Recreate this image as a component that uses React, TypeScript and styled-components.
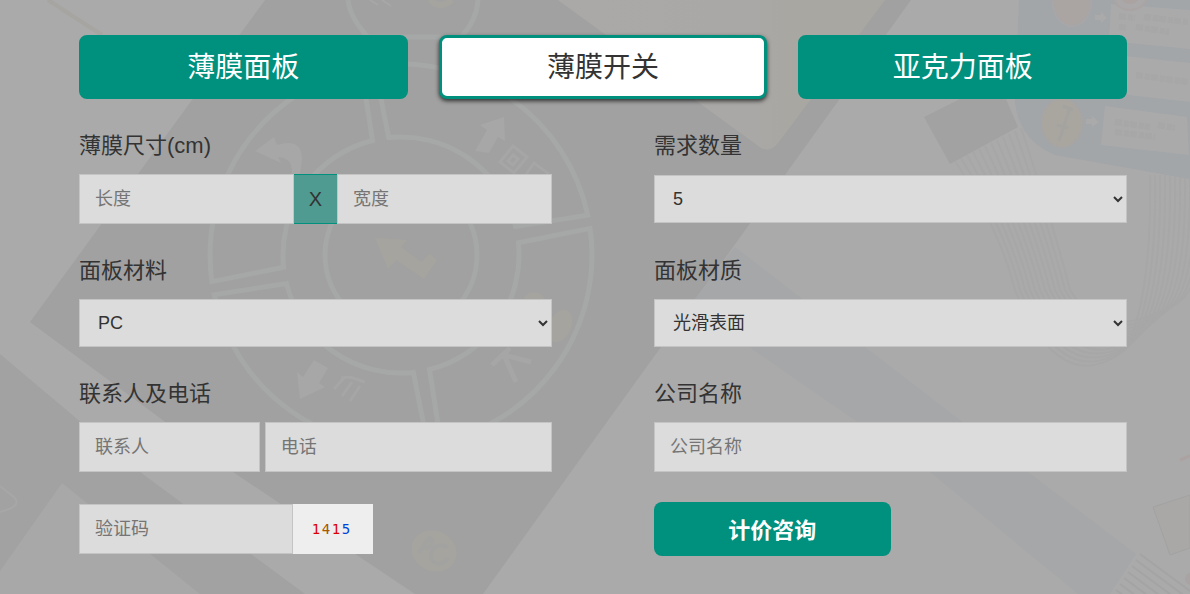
import React, { useState } from 'react';
import styled, { createGlobalStyle } from 'styled-components';

const GREEN = '#00907e';
const FONT = '"Liberation Sans", "Noto Sans CJK SC", sans-serif';

const GlobalStyle = createGlobalStyle`
  *, *::before, *::after { box-sizing: border-box; }
  body {
    margin: 0;
    background: #aaaaaa;
    color: #333333;
    font-family: ${FONT};
  }
`;

const Page = styled.main`
  position: relative;
  min-height: 100vh;
  padding: 35px 63px 38px 79px;
  overflow: hidden;
`;

const Backdrop = styled.svg`
  position: absolute;
  inset: 0;
  width: 100%;
  height: 100%;
`;

const Form = styled.form`
  position: relative;
  display: flex;
  flex-direction: column;
  gap: 32px;
`;

const Tabs = styled.div`
  display: grid;
  grid-template-columns: repeat(3, 1fr);
  gap: 31px;
`;

const Tab = styled.button<{ $active: boolean }>`
  height: 64px;
  padding: 2px 0 0;
  border: 3px solid ${GREEN};
  border-radius: 8px;
  background: ${(p) => (p.$active ? '#ffffff' : GREEN)};
  color: ${(p) => (p.$active ? '#333333' : '#ffffff')};
  box-shadow: ${(p) => (p.$active ? '0 2px 4px rgba(0, 0, 0, 0.7)' : 'none')};
  font-family: ${FONT};
  font-size: 28px;
  line-height: 56px;
  cursor: pointer;
`;

const Fields = styled.div`
  display: grid;
  grid-template-columns: repeat(2, minmax(0, 1fr));
  gap: 32px 102px;
`;

const Field = styled.div`
  display: flex;
  flex-direction: column;
  gap: 13px;
`;

const Label = styled.label`
  font-size: 22px;
  line-height: 30px;
`;

const ControlRow = styled.div<{ $gap?: number; $tall?: boolean }>`
  display: flex;
  align-items: center;
  gap: ${(p) => p.$gap ?? 0}px;
  min-height: ${(p) => (p.$tall ? 50 : 48)}px;
`;

const Input = styled.input<{ $grow?: number }>`
  flex: ${(p) => p.$grow ?? 1} 1 0;
  min-width: 0;
  height: 50px;
  padding: 0 15px;
  border: 1px solid #c4c4c4;
  border-radius: 0;
  background: #dcdcdc;
  color: #333333;
  font-family: ${FONT};
  font-size: 18px;

  &::placeholder {
    color: #757575;
    opacity: 1;
  }
`;

const CodeInput = styled(Input)`
  flex: 0 1 214px;
`;

const Select = styled.select`
  flex: 1;
  min-width: 0;
  height: 48px;
  padding: 0 0 0 14px;
  border: 1px solid #c4c4c4;
  border-radius: 0;
  background: #dcdcdc;
  color: #333333;
  font-family: ${FONT};
  font-size: 18px;
`;

const Times = styled.span`
  flex: 0 0 43px;
  height: 50px;
  border: 1px solid ${GREEN};
  border-width: 1px 0;
  background: #509b91;
  font-size: 20px;
  line-height: 48px;
  text-align: center;
`;

const Captcha = styled.button`
  display: flex;
  justify-content: center;
  align-items: center;
  width: 80px;
  height: 50px;
  padding: 0 4px 0 0;
  border: 0;
  background: #eeeeee;
  font-family: "DejaVu Sans Mono", monospace;
  font-size: 14px;
  cursor: pointer;
`;

const Digit = styled.span<{ $color: string }>`
  width: 10px;
  color: ${(p) => p.$color};
`;

const Submit = styled.button`
  width: 50%;
  height: 54px;
  padding: 0 0 2px;
  border: 0;
  border-radius: 8px;
  background: ${GREEN};
  color: #ffffff;
  font-family: ${FONT};
  font-size: 22px;
  font-weight: bold;
  cursor: pointer;
`;

const Actions = styled(Fields)`
  margin-top: -2px;
  align-items: center;
`;

const polar = (r: number, deg: number) => {
  const a = (deg * Math.PI) / 180;
  return `${(401 + r * Math.cos(a)).toFixed(1)} ${(255 + r * Math.sin(a)).toFixed(1)}`;
};

/* One quarter of the dial: a ring sector with a slim gap on either side. */
const sector = (start: number) =>
  `M${polar(118, start + 4)} L${polar(191, start + 2)} A191 191 0 0 1 ${polar(191, start + 88)} ` +
  `L${polar(118, start + 86)} A118 118 0 0 0 ${polar(118, start + 4)}Z`;

const range = (n: number) => Array.from({ length: n }, (_, i) => i);

function Scene() {
  return (
    <Backdrop viewBox="0 0 1190 594" preserveAspectRatio="xMidYMid slice" aria-hidden="true">
      <defs>
        <linearGradient id="tan" x1="0" x2="1">
          <stop offset="0" stopColor="#aaa9a8" />
          <stop offset="0.6" stopColor="#a9a8a6" />
          <stop offset="0.7" stopColor="#a8a7a2" />
        </linearGradient>
      </defs>
      <rect width="1190" height="594" fill="#aaaaaa" />
      <path d="M265 0H911L483 594H415L233 472L30 322Z" fill="#a1a1a1" />
      <path d="M0 354L140 472L305 594H0Z" fill="#a2a2a2" />
      <path d="M62 483L0 571V594H200Z" fill="#a8a8a8" />
      <path d="M48 0L102 35" stroke="#a6a5a1" strokeWidth="4" />
      <path d="M558 0L757 145Q768 155 778 143L885 0Z" fill="url(#tan)" />
      <path d="M0 486L15 498Q19 504 12 508L0 512" fill="none" stroke="#a7a7a7" strokeWidth="2" />
      <path d="M735 247L865 347L960 420L1136 554L1110 594H1078L930 472L785 372L690 305Z" fill="#a5a7a9" />

      <g fill="none" stroke="#a6a7a7" strokeWidth="5">
        <circle cx="401" cy="255" r="76" />
        {[-10, 80, 170, 260].map((a) => <path key={a} d={sector(a)} />)}
        <path d="M348 0Q350 18 368 37H461Q477 20 478 0" />
      </g>
      <path d="M430 0Q440 10 452 0" fill="none" stroke="#a6a49f" strokeWidth="6" />
      <path d="M370 0L378 5M382 0L391 6" stroke="#a7a7a7" strokeWidth="2" />

      <g fill="#a7a7a7">
        <path d="M480 125L504 117L505 141L498 137L489 153L475 151L487 130Z" />
        <path d="M297 372L303 377L314 360L328 368L319 383L325 387L300 399Z" />
        <path d="M255 151L274 137L277 145Q302 137 302 160L299 180L291 177Q295 158 278 157L281 163Z" />
      </g>
      <g fill="none" stroke="#a6a6a6" strokeWidth="3">
        <path d="M513 146L527 157L514 173L500 162Z" />
        <path d="M513 155L518 159L513 165L508 161Z" />
        <path d="M525 176L534 163L549 174" />
        <path d="M334 389L344 378M342 396L352 382M350 401L360 386M341 378L350 377L365 382" />
        <path d="M492 365L510 348M504 355L531 362M504 355L516 382" strokeWidth="5" />
      </g>
      <g fill="#a6a49f">
        <path d="M375 238L407 240L401 247L421 262L430 254L437 260L424 279L396 260L388 269Z" />
        <ellipse cx="534" cy="302" rx="11" ry="10" />
        <ellipse cx="560" cy="326" rx="11" ry="17" transform="rotate(25 560 326)" />
        <ellipse cx="434" cy="551" rx="23" ry="20" transform="rotate(25 434 551)" />
      </g>
      <path
        d="M419 553L429 538Q435 540 430 546Q426 550 423 546M448 547Q437 542 432 551Q428 562 440 564Q446 562 448 558"
        fill="none" stroke="#a2a2a1" strokeWidth="4"
      />

      <path d="M924 117L960 99H1006L1018 127L950 164Z" fill="#a2a2a2" />
      <g fill="none" stroke="#a7a7a7" strokeWidth="2">
        {range(12).map((i) => (
          <path
            key={i}
            d={`M${955 + i * 6} ${161 - i * 3} Q${1000 + i * 5} 230 ${1015 + i * 5} 290 Q${1060 + i * 4} ${400 - i * 5} ${1125 + i * 4} ${350 - i * 4} Q${1152 + i * 5} 300 ${1150 + i * 5} 175`}
          />
        ))}
      </g>

      <path d="M1019 0L1016 70Q1006 135 1055 155L1190 179V0Z" fill="#a2a6a9" />
      <g fill="#aaaaaa">
        <path d="M1111 4L1190 10V49L1109 41Z" />
        <path d="M1124 56L1190 63V102L1120 94Z" />
        <path d="M1105 106L1187 117L1189 155L1101 145Z" />
        <path d="M1095 15L1101 15V12L1107 18L1101 23V20H1095ZM1086 119L1092 119V116L1099 122L1092 127V124H1086Z" />
      </g>
      <g stroke="#a6a6a6" strokeWidth="6" strokeDasharray="7 2 5 1" opacity="0.7">
        <path d="M1119 16L1135 18M1144 17L1188 22M1119 27L1128 28M1136 27L1169 32" />
        <path d="M1136 75L1188 82M1115 122L1150 127M1158 125L1175 128M1115 132L1155 137" />
      </g>
      <g strokeWidth="2">
        <ellipse cx="1072" cy="3" rx="19" ry="23" fill="#aaa4a3" stroke="#a7a7a9" />
        <ellipse cx="1130" cy="-7" rx="18" ry="17" fill="#aaa8a8" stroke="#aaa4a4" />
        <ellipse cx="1130" cy="-8" rx="11" ry="12" fill="#aaa3a2" />
        <ellipse cx="1062" cy="123" rx="20" ry="24" fill="#a8a69f" stroke="#a8a5a3" />
      </g>
      <path d="M1070 107L1059 141M1063 106L1073 110M1057 125L1068 128" stroke="#a5a3a0" strokeWidth="3" />

      <path d="M1190 495L1153 507L1170 555L1190 548Z" fill="#a9a8a6" stroke="#a2a2a2" />
      <path d="M1180 460L1190 456" stroke="#aca2a2" strokeWidth="3" />
      <circle cx="1191" cy="579" r="6" fill="#aaa3a3" />
      <g stroke="#a4a4a4" strokeWidth="2">
        {range(8).map((i) => (
          <path key={i} d={`M${1140 - i * 4} ${554 + i * 6}L${1205 - i * 4} ${602 + i * 6}`} />
        ))}
      </g>
    </Backdrop>
  );
}

const TABS = ['薄膜面板', '薄膜开关', '亚克力面板'];

const CODE = [
  { digit: '1', color: '#dd0000' },
  { digit: '4', color: '#aa5500' },
  { digit: '1', color: '#dd0000' },
  { digit: '5', color: '#0040dd' },
];

interface SelectFieldProps {
  id: string;
  label: string;
  options: string[];
  tall?: boolean;
}

function SelectField({ id, label, options, tall }: SelectFieldProps) {
  return (
    <Field>
      <Label htmlFor={id}>{label}</Label>
      <ControlRow $tall={tall}>
        <Select id={id} defaultValue={options[0]}>
          {options.map((o) => <option key={o}>{o}</option>)}
        </Select>
      </ControlRow>
    </Field>
  );
}

export default function App() {
  const [active, setActive] = useState(1);

  return (
    <>
      <GlobalStyle />
      <Page>
        <Scene />
        <Form onSubmit={(e) => e.preventDefault()}>
          <Tabs>
            {TABS.map((name, i) => (
              <Tab key={name} type="button" $active={i === active} aria-pressed={i === active} onClick={() => setActive(i)}>
                {name}
              </Tab>
            ))}
          </Tabs>

          <Fields>
            <Field>
              <Label htmlFor="length">薄膜尺寸(cm)</Label>
              <ControlRow>
                <Input id="length" placeholder="长度" />
                <Times>X</Times>
                <Input aria-label="宽度" placeholder="宽度" />
              </ControlRow>
            </Field>
            <SelectField id="quantity" label="需求数量" options={['5']} tall />
            <SelectField id="material" label="面板材料" options={['PC']} />
            <SelectField id="surface" label="面板材质" options={['光滑表面']} />
            <Field>
              <Label htmlFor="contact">联系人及电话</Label>
              <ControlRow $gap={5}>
                <Input id="contact" placeholder="联系人" $grow={7} />
                <Input type="tel" aria-label="电话" placeholder="电话" $grow={12} />
              </ControlRow>
            </Field>
            <Field>
              <Label htmlFor="company">公司名称</Label>
              <ControlRow>
                <Input id="company" placeholder="公司名称" />
              </ControlRow>
            </Field>
          </Fields>

          <Actions>
            <ControlRow>
              <CodeInput aria-label="验证码" placeholder="验证码" />
              <Captcha type="button">
                {CODE.map((c, i) => <Digit key={i} $color={c.color}>{c.digit}</Digit>)}
              </Captcha>
            </ControlRow>
            <Submit type="submit">计价咨询</Submit>
          </Actions>
        </Form>
      </Page>
    </>
  );
}
